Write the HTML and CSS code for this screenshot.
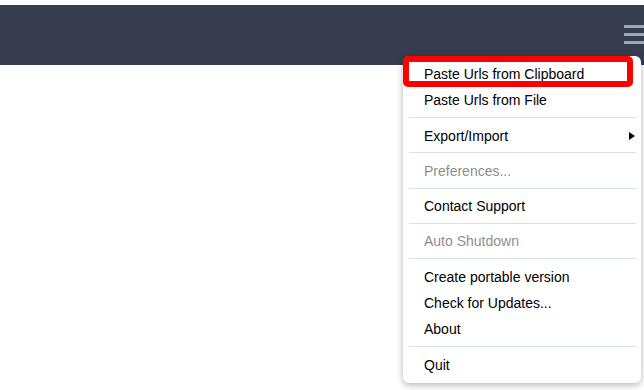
FILE: index.html
```html
<!DOCTYPE html>
<html lang="en">
<head>
    <meta charset="UTF-8">
    <meta name="viewport" content="width=device-width, initial-scale=1.0">
    <title>Menu</title>
    <link rel="stylesheet" href="styles.css">
</head>
<body>
    <div class="topbar">
        <button type="button" class="menu-btn" aria-label="Menu">
            <span></span><span></span><span></span>
        </button>
    </div>

    <ul class="dropdown">
        <li class="item">Paste Urls from Clipboard</li>
        <li class="item">Paste Urls from File</li>
        <li class="sep"></li>
        <li class="item has-sub">Export/Import<span class="arrow"></span></li>
        <li class="sep"></li>
        <li class="item disabled">Preferences...</li>
        <li class="sep"></li>
        <li class="item">Contact Support</li>
        <li class="sep"></li>
        <li class="item disabled">Auto Shutdown</li>
        <li class="sep"></li>
        <li class="item">Create portable version</li>
        <li class="item">Check for Updates...</li>
        <li class="item">About</li>
        <li class="sep"></li>
        <li class="item">Quit</li>
    </ul>

    <div class="highlight"></div>
</body>
</html>
```

FILE: styles.css
```css
body {
    font-family: "Liberation Sans", Arial, sans-serif;
    background-color: #fff;
    margin: 0;
    padding: 0;
    overflow: hidden;
}
.topbar {
    margin-top: 5px;
    height: 60px;
    background-color: #353d4f;
    display: flex;
    justify-content: flex-end;
}
.menu-btn {
    margin: 20px -6px 0 0;
    padding: 0;
    width: 26px;
    height: 24px;
    border: none;
    background: none;
    display: flex;
    flex-direction: column;
    gap: 5px;
    cursor: pointer;
}
.menu-btn span {
    display: block;
    height: 3px;
    background-color: #9ea6b9;
}
.dropdown {
    position: absolute;
    top: 56px;
    left: 403px;
    width: 238px;
    margin: 0;
    padding: 5px 0;
    list-style: none;
    background-color: #fff;
    border-radius: 6px;
    box-shadow: 0 2px 7px rgba(0, 0, 0, 0.3);
    box-sizing: border-box;
}
.item {
    position: relative;
    padding: 5px 21px;
    line-height: 16.3px;
    font-size: 14px;
    color: #000;
}
.item.disabled {
    color: #8e8e8e;
}
.sep {
    height: 1px;
    margin: 3.5px 5px 4.5px 6px;
    background-color: #d5e3ec;
}
.arrow {
    position: absolute;
    right: 6px;
    top: 9.5px;
    width: 0;
    height: 0;
    border-top: 4px solid transparent;
    border-bottom: 4px solid transparent;
    border-left: 6px solid #000;
}
.highlight {
    position: absolute;
    top: 56px;
    left: 403px;
    width: 230px;
    height: 31px;
    border: 6px solid #ff0000;
    border-radius: 5px;
    box-sizing: border-box;
}
```
